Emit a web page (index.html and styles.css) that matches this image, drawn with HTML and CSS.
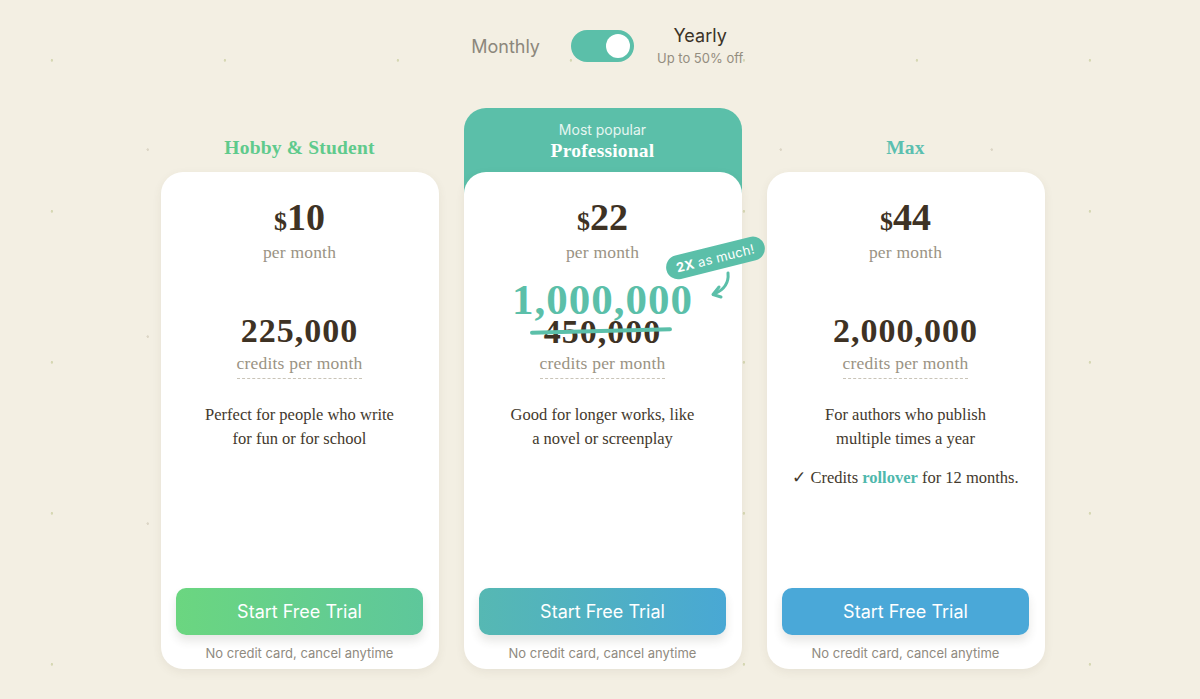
FILE: index.html
```html
<!DOCTYPE html>
<html>
<head>
<meta charset="utf-8">
<link rel="stylesheet" href="styles.css">
</head>
<body>
<div class="page">
  <div class="billing">
    <span class="monthly">Monthly</span>
    <div class="toggle"><span class="knob"></span></div>
    <div class="yearly">
      <div class="yearly-title">Yearly</div>
      <div class="yearly-sub">Up to 50% off</div>
    </div>
  </div>

  <div class="plans">
    <div class="plan">
      <div class="plan-head"><div class="plan-name green">Hobby &amp; Student</div></div>
      <div class="card">
        <div class="price"><span class="cur">$</span>10</div>
        <div class="per">per month</div>
        <div class="credits">
          <div class="num">225,000</div>
          <div class="cpm">credits per month</div>
        </div>
        <p class="desc">Perfect for people who write<br>for fun or for school</p>
        <button class="cta cta-green">Start Free Trial</button>
        <div class="note">No credit card, cancel anytime</div>
      </div>
    </div>

    <div class="plan popular">
      <div class="plan-head">
        <div class="pop-label">Most popular</div>
        <div class="plan-name white">Professional</div>
      </div>
      <div class="card">
        <div class="price"><span class="cur">$</span>22</div>
        <div class="per">per month</div>
        <div class="credits credits-pro">
          <div class="num big">1,000,000</div>
          <div class="num old">450,000<span class="strike"></span></div>
          <div class="cpm cpm-pro">credits per month</div>
        </div>
        <p class="desc">Good for longer works, like<br>a novel or screenplay</p>
        <button class="cta cta-teal">Start Free Trial</button>
        <div class="note">No credit card, cancel anytime</div>
        <div class="badge"><b>2X</b> as much!</div>
        <svg class="arrow" width="30" height="34" viewBox="0 0 30 34">
          <path d="M22 4 C23 14 18 21 8 25" fill="none" stroke="#5bbfa9" stroke-width="3" stroke-linecap="round"/>
          <path d="M13 18 L7 25.5 L15 28" fill="none" stroke="#5bbfa9" stroke-width="3" stroke-linecap="round" stroke-linejoin="round"/>
        </svg>
      </div>
    </div>

    <div class="plan">
      <div class="plan-head"><div class="plan-name teal">Max</div></div>
      <div class="card">
        <div class="price"><span class="cur">$</span>44</div>
        <div class="per">per month</div>
        <div class="credits">
          <div class="num">2,000,000</div>
          <div class="cpm">credits per month</div>
        </div>
        <p class="desc">For authors who publish<br>multiple times a year</p>
        <p class="rollover">✓ Credits <span class="hl">rollover</span> for 12 months.</p>
        <button class="cta cta-blue">Start Free Trial</button>
        <div class="note">No credit card, cancel anytime</div>
      </div>
    </div>
  </div>
</div>
</body>
</html>
```

FILE: styles.css
```css
* { box-sizing: border-box; }
html, body { margin: 0; padding: 0; }
body {
  background-color: #f3efe3;
  background-image:
    radial-gradient(circle at 30% 40%, rgba(160,170,90,0.35) 0 1px, transparent 1.5px),
    radial-gradient(circle at 70% 80%, rgba(150,140,110,0.25) 0 1px, transparent 1.5px);
  background-size: 173px 151px, 211px 187px;
  font-family: "Liberation Serif", "Times New Roman", serif;
  width: 1200px;
  height: 699px;
  overflow: hidden;
}
.page { padding-top: 25px; }

.billing {
  display: grid;
  grid-template-columns: 1fr auto 1fr;
  align-items: center;
  padding-left: 5px;
}
.monthly {
  justify-self: end;
  margin-right: 31px;
  font-family: Inter, "Liberation Sans", sans-serif;
  font-size: 18px;
  color: #8c877c;
}
.toggle {
  width: 63px;
  height: 32px;
  border-radius: 16px;
  background: #5bbfa9;
  position: relative;
}
.knob {
  position: absolute;
  right: 4px;
  top: 4px;
  width: 24px;
  height: 24px;
  border-radius: 50%;
  background: #fff;
}
.yearly {
  justify-self: start;
  margin-left: 23px;
  text-align: center;
  font-family: Inter, "Liberation Sans", sans-serif;
}
.yearly-title { font-size: 18px; line-height: 22px; color: #3b3327; }
.yearly-sub { font-size: 13px; line-height: 18px; margin-top: 2px; color: #938d80; }

.plans {
  display: flex;
  justify-content: center;
  gap: 25px;
  margin-top: 41px;
  padding-left: 5px;
}
.plan {
  width: 278px;
  display: flex;
  flex-direction: column;
}
.popular {
  background: linear-gradient(#5bbfa9, #5bbfa9) top / 100% 100px no-repeat;
  border-radius: 22px 22px 0 0;
}
.plan-head {
  height: 64px;
  display: flex;
  flex-direction: column;
  align-items: center;
  justify-content: center;
  padding-top: 16px;
}
.popular .plan-head { padding-top: 4px; }
.plan-name {
  font-weight: bold;
  font-size: 19.5px;
  line-height: 24px;
  letter-spacing: 0.2px;
}
.green { color: #5fca8c; }
.teal { color: #5bbfb0; }
.white { color: #fff; }
.pop-label {
  font-family: Inter, "Liberation Sans", sans-serif;
  font-size: 14px;
  line-height: 18px;
  color: #e6f6f1;
}

.card {
  position: relative;
  height: 497px;
  background: #fff;
  border-radius: 22px;
  box-shadow: 0 3px 10px rgba(90, 80, 50, 0.08);
  display: flex;
  flex-direction: column;
  align-items: center;
  padding: 24px 16px 7px;
  color: #3e3224;
}
.price {
  font-size: 38px;
  font-weight: bold;
  line-height: 42px;
  color: #3e3224;
}
.cur { font-size: 26px; }
.per {
  font-size: 17.5px;
  line-height: 24px;
  margin-top: -3px;
  color: #9a9384;
  letter-spacing: 0.2px;
}
.credits {
  margin-top: 49px;
  display: flex;
  flex-direction: column;
  align-items: center;
}
.credits-pro { margin-top: 19px; }
.num {
  font-size: 34px;
  font-weight: bold;
  line-height: 36px;
  color: #3e3224;
  letter-spacing: 1px;
}
.big {
  font-size: 43px;
  line-height: 34px;
  color: #5bbfa9;
}
.old { position: relative; line-height: 30px; margin-top: 0; }
.strike {
  position: absolute;
  left: -14px;
  right: -10px;
  top: 12px;
  height: 4px;
  border-radius: 2px;
  background: #5bbfa9;
  transform: rotate(-1.5deg);
}
.cpm {
  font-size: 17.5px;
  line-height: 24px;
  margin-top: 2px;
  padding-bottom: 3px;
  color: #9a9384;
  border-bottom: 1.5px dashed #c9c4b8;
  letter-spacing: 0.2px;
}
.cpm-pro { margin-top: 4px; }
.desc {
  margin: 24px 0 0;
  font-size: 16.5px;
  line-height: 24px;
  text-align: center;
  color: #43392d;
}
.rollover {
  margin: 15px 0 0;
  font-size: 16.5px;
  line-height: 24px;
  color: #43392d;
}
.hl { color: #4fb8ad; font-weight: bold; }

.cta {
  margin-top: auto;
  width: 247px;
  height: 47px;
  border: none;
  border-radius: 10px;
  font-family: Inter, "Liberation Sans", sans-serif;
  font-size: 18px;
  color: #fff;
  box-shadow: 0 6px 10px rgba(60, 60, 40, 0.12);
}
.cta-green { background: linear-gradient(90deg, #6bd680, #5ec79b); }
.cta-teal { background: linear-gradient(90deg, #56b8b3, #49a8d4); }
.cta-blue { background: #4aa8d8; }
.note {
  margin-top: 9px;
  font-family: Inter, "Liberation Sans", sans-serif;
  font-size: 13px;
  line-height: 18px;
  color: #8f8a80;
}

.badge {
  position: absolute;
  left: 201px;
  top: 74px;
  padding: 3px 10px;
  border-radius: 14px;
  background: #5bbfa9;
  color: #fff;
  font-family: Inter, "Liberation Sans", sans-serif;
  font-size: 13px;
  line-height: 18px;
  letter-spacing: 0.3px;
  transform: rotate(-14deg);
  white-space: nowrap;
}
.badge b { font-weight: 700; }
.arrow {
  position: absolute;
  left: 242px;
  top: 97px;
}
```
